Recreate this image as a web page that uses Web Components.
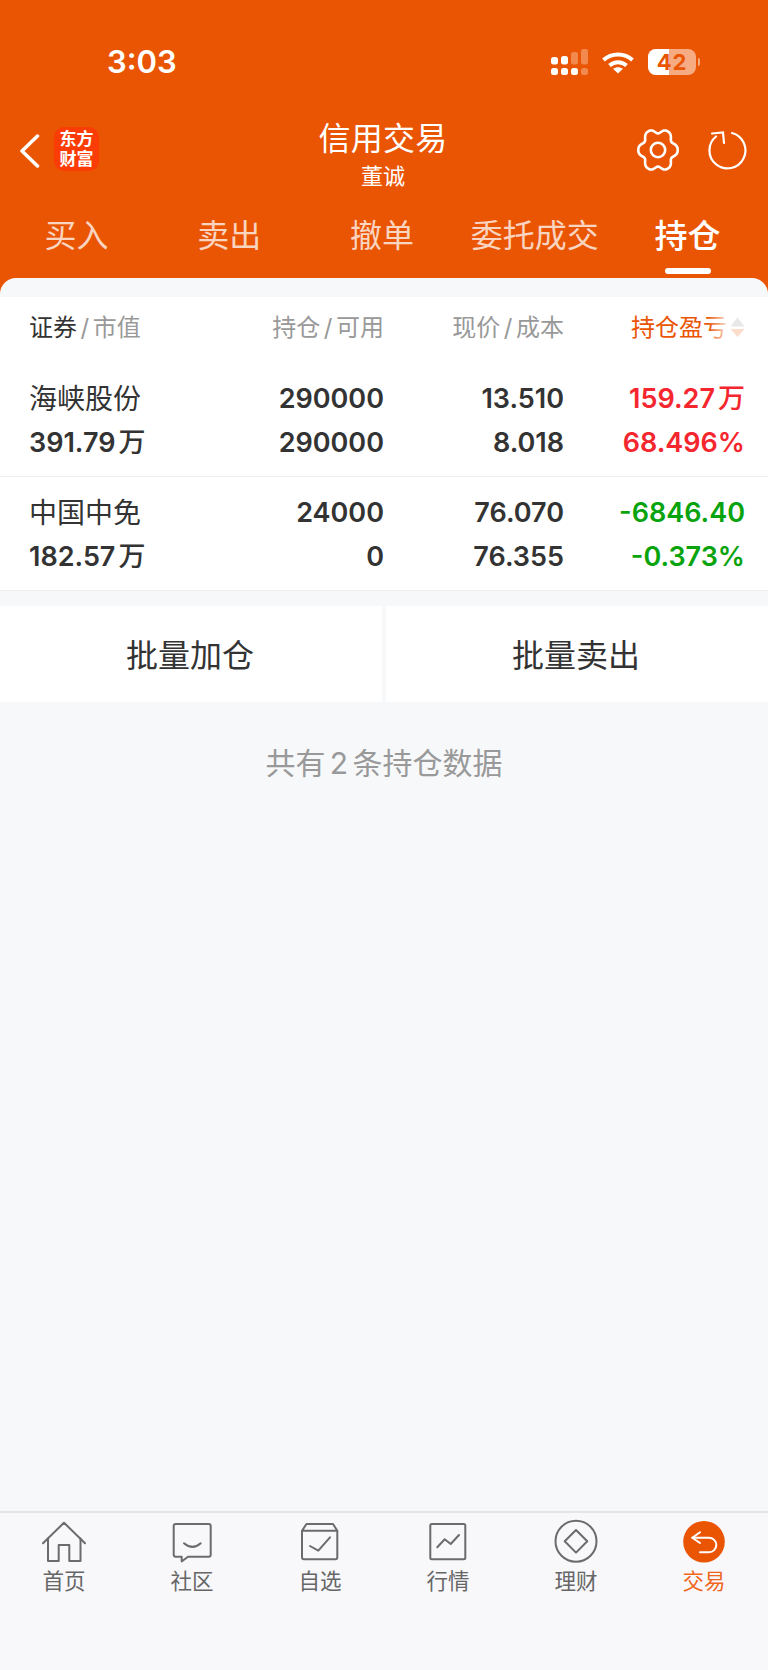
<!DOCTYPE html>
<html lang="zh"><head><meta charset="utf-8"><title>信用交易</title>
<style>
html,body{margin:0;padding:0;background:#f7f8fa}
</style></head><body>
<app-root></app-root>
<script>
const FONT='Inter,"Noto Sans CJK SC",sans-serif';
const ORANGE='#ea5504';
const define=(name,render)=>customElements.define(name,class extends HTMLElement{
  constructor(){super();this.attachShadow({mode:'open'}).innerHTML=render(this)}
});

define('status-bar',()=>`<style>
:host{display:flex;height:124px;box-sizing:border-box;padding:44px 68px 0 107px;color:#fff;font-family:${FONT}}
.t{font-size:31px;font-weight:600;line-height:36px}
.r{margin-left:auto;display:flex;align-items:flex-start;padding-top:5px}
svg{display:block}
.batt{position:relative;width:48px;height:26px;margin-left:14px;border-radius:8px;background:#f6ab82;overflow:hidden;font-size:22px;font-weight:700;line-height:26px;text-align:center;color:${ORANGE};letter-spacing:1px}
.batt i{position:absolute;left:0;top:0;bottom:0;width:21px;background:#fff}
.batt span{position:relative}
.nub{width:2px;height:8px;background:#f6ab82;border-radius:0 3px 3px 0;margin:9px 0 0 2px}
</style><div class="t">3:03</div><div class="r">
<svg width="37" height="26" viewBox="0 0 37 26"><g fill="#fff"><rect x="0" y="8" width="7" height="7.500" rx="2.500"/><rect x="10" y="7" width="7" height="8.500" rx="2.500"/><rect x="0" y="19" width="7" height="7" rx="2.500"/><rect x="10" y="19" width="7" height="7" rx="2.500"/><rect x="20" y="19" width="7" height="7" rx="2.500"/></g><g fill="#f28a50"><rect x="20" y="3" width="7" height="12.500" rx="2.500"/><rect x="30" y="0" width="7" height="15.500" rx="2.500"/><rect x="30" y="19" width="7" height="7" rx="2.500"/></g></svg>
<svg style="margin:3px 0 0 14px" width="32" height="22" viewBox="0 0 32 22"><g fill="none" stroke="#fff" stroke-width="4"><path d="M1.500 8C9.500 0.500 22.500 0.500 30.500 8"/><path d="M7.500 13.500C12.500 9 19.500 9 24.500 13.500"/></g><path d="M16 21.500L11 16.800C14 14.600 18 14.600 21 16.800Z" fill="#fff"/></svg>
<div class="batt"><i></i><span>42</span></div><div class="nub"></div></div>`);

define('nav-bar',()=>{
  let d='';
  for(let a=0;a<360;a+=3){const t=a*Math.PI/180,r=21.4-4.8*Math.pow(Math.abs(Math.sin(3*t)),3);
    d+=(a?'L':'M')+(22+.92*r*Math.cos(t)).toFixed(2)+' '+(22+r*Math.sin(t)).toFixed(2)}
  d+='Z';
  return `<style>
:host{display:flex;height:70px;color:#fff;font-family:${FONT}}
.l{display:flex;width:200px;padding:3px 0 0 20px;box-sizing:border-box}
.back{margin-top:7px}
.logo{width:45px;height:44px;box-sizing:border-box;padding-top:2px;border-radius:10px;background:#fb3c04;margin-left:14px;color:#fff;font:700 17px/20px "Liberation Sans","Noto Sans CJK SC",sans-serif;text-align:center;display:flex;align-items:center;justify-content:center}
.c{flex:1;text-align:center;padding-right:2px}
.a{font-size:32px;line-height:40px;margin-top:-5px;letter-spacing:.3px}
.b{font-size:22px;line-height:26px;margin-top:4px}
.r{width:200px;display:flex;justify-content:flex-end;align-items:flex-start;padding:4px 20px 0 0;box-sizing:border-box}
svg{display:block}
</style><div class="l"><svg class="back" width="20" height="34" viewBox="0 0 20 34" fill="none" stroke="#fff" stroke-width="3.500" stroke-linecap="round" stroke-linejoin="round"><path d="M17.500 2L2 17L17.500 32"/></svg><div class="logo"><span>东方<br>财富</span></div></div>
<div class="c"><div class="a">信用交易</div><div class="b">董诚</div></div>
<div class="r"><svg width="44" height="44" viewBox="0 0 44 44" fill="none" stroke="#fff" stroke-width="2.600" stroke-linejoin="round"><path d="${d}"/><circle cx="22" cy="22" r="7.200"/></svg>
<svg style="margin:1px 0 0 28px" width="40" height="42" viewBox="0 0 40 42" fill="none" stroke="#fff" stroke-width="2.200" stroke-linecap="round"><path d="M24 4A18 18 0 1 1 8 7.500"/><path d="M4 4.500L15 3.500L16 14"/></svg></div>`});

define('tab-bar',()=>`<style>
:host{display:flex;height:84px;padding-right:4px;font-family:${FONT}}
</style><slot></slot>`);
define('tab-item',()=>`<style>
:host{display:block;flex:1;text-align:center;font-size:32px;line-height:40px;padding-top:22px;color:rgba(255,255,255,.75);position:relative}
:host([on]){color:#fff;font-weight:500;font-size:33px}
:host([on])::after{content:"";position:absolute;left:50%;margin-left:-23px;top:74px;width:46px;height:6px;border-radius:3px;background:#fff}
</style><slot></slot>`);

define('table-head',()=>`<style>
:host{display:grid;grid-template-columns:150px 205px 180px 181px;padding:13px 23px 17px 29px;height:36px;background:#fff;font-size:24px;line-height:36px;color:#999;position:relative;font-family:${FONT}}
div{white-space:nowrap}.e{text-align:right}
b{font-weight:400;color:#333}
u{text-decoration:none;margin:0 3.500px}
.a{color:${ORANGE};padding-right:18px}
.fade{position:absolute;left:708px;top:15px;width:20px;height:34px;background:linear-gradient(90deg,rgba(255,255,255,0),rgba(255,255,255,.85))}
svg{position:absolute;left:730px;top:20px}
</style><div><b>证券</b><u>/</u>市值</div><div class="e">持仓<u>/</u>可用</div><div class="e">现价<u>/</u>成本</div><div class="e a">持仓盈亏</div>
<i class="fade"></i><svg width="15" height="20" viewBox="0 0 15 20"><path d="M7.500 0.500L14.500 9.500H0.500Z" fill="#e8e8e8"/><path d="M0.500 12H14.500L7.500 20Z" fill="#fcdccb"/></svg>`);

define('hold-row',()=>`<style>
:host{display:grid;grid-template-columns:150px 205px 180px 181px;grid-auto-rows:44px;padding:14px 23px 11px 29px;background:#fff;font-size:27px;line-height:44px;color:#333;font-weight:560;font-family:${FONT};border-bottom:1px solid #eee;white-space:nowrap}
::slotted(span){text-align:right}
::slotted(.n){text-align:left;font-weight:400;font-size:28px}
::slotted(.v){text-align:left}
::slotted(.up){color:#f5262e}
::slotted(.dn){color:#09a30e}
</style><slot></slot>`);

define('action-btn',()=>`<style>
:host{display:flex;flex:1;height:96px;box-sizing:border-box;padding:0 2px 2px 0;align-items:center;justify-content:center;background:#fff;color:#333;font-size:32px;font-family:${FONT}}
</style><slot></slot>`);

define('nav-item',()=>`<style>
:host{display:flex;flex:1;flex-direction:column;align-items:center;font-size:21.500px;line-height:26px;color:#666;font-family:${FONT}}
:host([on]){color:#f0661c}
.i{width:48px;height:48px;margin-bottom:2px}
::slotted(svg){display:block}
</style><div class="i"><slot name="icon"></slot></div><slot></slot>`);

const ic=(body)=>`<svg slot="icon" width="48" height="48" viewBox="0 0 48 48" fill="none" stroke="#6b6b6b" stroke-width="2" stroke-linecap="round" stroke-linejoin="round">${body}</svg>`;

define('app-root',()=>`<style>
:host{display:flex;flex-direction:column;height:1670px;width:768px;overflow:hidden;background:linear-gradient(${ORANGE} 300px,#f7f8fa 300px);font-family:${FONT}}
.sheet{flex:1;display:flex;flex-direction:column;background:#f7f8fa;border-radius:16px 16px 0 0;padding-top:19px}
.btns{display:flex;gap:4px;margin-top:15px}
.tip{text-align:center;font-size:30px;line-height:40px;margin-top:41px;color:#999;word-spacing:-4px}
.bar{display:flex;height:159px;box-sizing:border-box;border-top:2px solid #e4e4e8;background:#f8f8fb;padding-top:5px}
.w{font-size:27px;margin-left:3px;font-weight:500}
</style>
<status-bar></status-bar><nav-bar></nav-bar>
<tab-bar><tab-item>买入</tab-item><tab-item>卖出</tab-item><tab-item>撤单</tab-item><tab-item>委托成交</tab-item><tab-item on>持仓</tab-item></tab-bar>
<div class="sheet">
<table-head></table-head>
<hold-row><span class="n">海峡股份</span><span>290000</span><span>13.510</span><span class="up">159.27<span class="w">万</span></span><span class="v">391.79<span class="w">万</span></span><span>290000</span><span>8.018</span><span class="up">68.496%</span></hold-row>
<hold-row><span class="n">中国中免</span><span>24000</span><span>76.070</span><span class="dn">-6846.40</span><span class="v">182.57<span class="w">万</span></span><span>0</span><span>76.355</span><span class="dn">-0.373%</span></hold-row>
<div class="btns"><action-btn>批量加仓</action-btn><action-btn>批量卖出</action-btn></div>
<div class="tip">共有 2 条持仓数据</div>
</div>
<div class="bar">
<nav-item>${ic('<path d="M3 25.300L24 4.700L45 25.300"/><path d="M8 20.500V43H18.700V27H29.300V43H40.500V20.500"/>')}首页</nav-item>
<nav-item>${ic('<path d="M7.700 6H40.700A2 2 0 0 1 42.700 8V36.700A2 2 0 0 1 40.700 38.700H20L13.700 43.500V38.700H7.700A2 2 0 0 1 5.700 36.700V8A2 2 0 0 1 7.700 6Z"/><path d="M16 25.300Q24.500 32.500 32.700 25.300"/>')}社区</nav-item>
<nav-item>${ic('<path d="M6 12.700H41.300V39.300A2 2 0 0 1 39.300 41.300H8A2 2 0 0 1 6 39.300V12.700L10.500 6H37L41.300 12.700"/><path d="M14 28L22.300 32.700L34 19.300"/>')}自选</nav-item>
<nav-item>${ic('<rect x="6.300" y="6" width="35" height="35.300" rx="1.500"/><path d="M13.300 29.300L20.700 21.300L26.700 26L35 17"/>')}行情</nav-item>
<nav-item>${ic('<circle cx="24" cy="23.300" r="20.500"/><path d="M24 12L35.300 23.300L24 34.600L12.700 23.300Z"/>')}理财</nav-item>
<nav-item on><svg slot="icon" width="48" height="48" viewBox="0 0 48 48" fill="none" stroke="#fff" stroke-width="2" stroke-linecap="round" stroke-linejoin="round"><circle cx="24" cy="23.700" r="20.800" fill="${ORANGE}" stroke="none"/><path d="M20 14.300L12.300 19.700L20 25"/><path d="M12.300 19.700H29A7.300 7.300 0 0 1 29 34.300H20"/></svg>交易</nav-item>
</div>`);
</script>
</body></html>
